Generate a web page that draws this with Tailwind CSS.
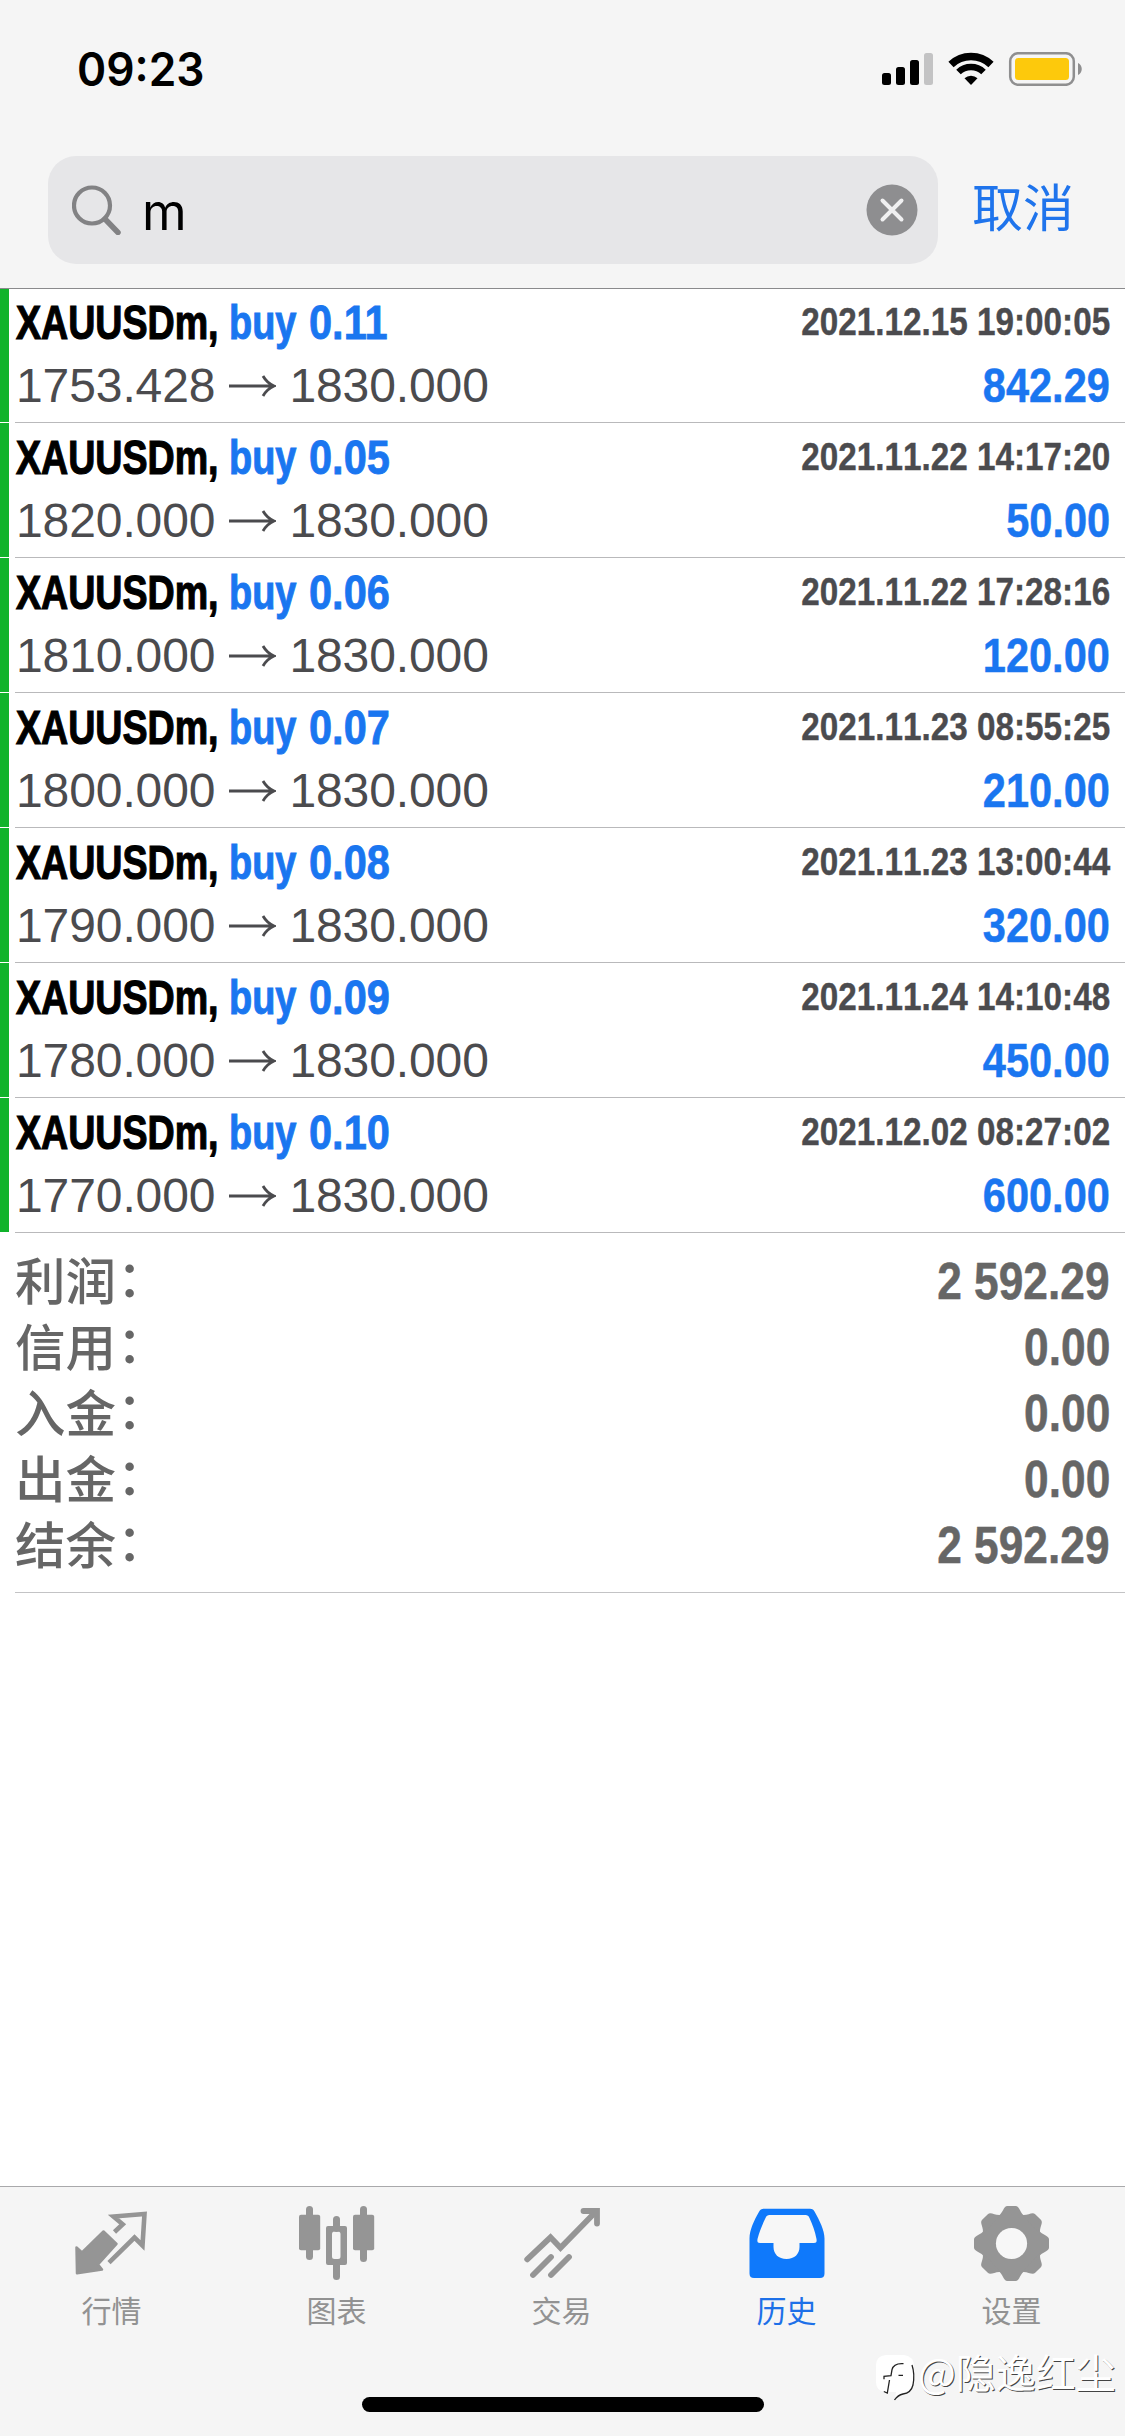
<!DOCTYPE html>
<html lang="zh-CN">
<head>
<meta charset="utf-8">
<title>历史</title>
<script src="https://cdn.jsdelivr.net/npm/@tailwindcss/browser@4"></script>
</head>
<body class="bg-white">
<div class="flex h-[2436px] w-[1125px] flex-col overflow-hidden bg-white font-['Liberation_Sans','Noto_Sans_CJK_SC',sans-serif]">
  <header class="flex h-[289px] shrink-0 flex-col border-b border-[#8a8a8c] bg-[#f5f5f5]">
    <div class="flex h-[138px] items-center justify-between pr-[43px] pl-[77px]">
      <span class="origin-left scale-x-[0.963] font-['Inter',sans-serif] text-[46px] font-semibold leading-none">09:23</span>
      <svg class="h-[34px] w-[200px]" viewBox="882 52 200 34">
        <rect x="882" y="73" width="9" height="12" rx="2.5"/>
        <rect x="896" y="67" width="9" height="18" rx="2.5"/>
        <rect x="910" y="60" width="9" height="25" rx="2.5"/>
        <rect x="924" y="53" width="9" height="32" rx="2.5" fill="#c3c3c4"/>
        <path d="M971 85l-6.500-6.800a9.500 9.500 0 0 1 13 0z"/>
        <path d="M951 64.500a29 29 0 0 1 40 0" fill="none" stroke="#000" stroke-width="7.500"/>
        <path d="M958.500 72a18 18 0 0 1 25 0" fill="none" stroke="#000" stroke-width="6.500"/>
        <rect x="1010.200" y="53.200" width="63.600" height="31.600" rx="8" fill="none" stroke="#8f8f90" stroke-width="2.500"/>
        <rect x="1015" y="58" width="54" height="22" rx="3.500" fill="#fdc90c"/>
        <path d="M1078 63v12c5-2 5-10 0-12z" fill="#8f8f90"/>
      </svg>
    </div>
    <div class="flex items-center pt-[18px] pl-12">
      <div class="flex h-[108px] w-[890px] items-center rounded-[28px] bg-[#e6e6e8] pr-5 pl-6">
        <svg class="h-[50px] w-[50px]" viewBox="72 185 50 50" fill="none" stroke="#828284">
          <circle cx="92" cy="205.500" r="18" stroke-width="4.200"/>
          <path d="M105 219l13 13.500" stroke-width="5.500" stroke-linecap="round"/>
        </svg>
        <span class="ml-5 pt-[3px] font-['Inter',sans-serif] text-[51px] leading-[60px]">m</span>
        <svg class="ml-auto h-[52px] w-[52px]" viewBox="0 0 52 52">
          <circle cx="26" cy="26" r="25.500" fill="#8e8e90"/>
          <path d="M16.500 16.500l19 19M35.500 16.500l-19 19" stroke="#f0f0f1" stroke-width="4" stroke-linecap="round"/>
        </svg>
      </div>
      <span class="ml-[34px] -mt-2.5 font-['Noto_Sans_CJK_SC',sans-serif] text-[51px] leading-none text-[#1f74ec]">取消</span>
    </div>
  </header>

  <main id="deals" class="flex shrink-0 flex-col"></main>

  <section id="totals" class="ml-[15px] flex h-[360px] shrink-0 flex-col border-b border-[#c3c3c5] pt-[14px] pr-[15px]"></section>

  <footer class="relative mt-auto flex h-[250px] shrink-0 flex-col border-t border-[#a9a9ab] bg-[#f5f5f5]">
    <nav class="mr-px -ml-px grid grid-cols-5 pt-4 text-center font-['Noto_Sans_CJK_SC',sans-serif] text-[30px] leading-[44px] text-[#929292]">
      <a class="flex flex-col items-center">
        <svg class="h-[84px] w-[86px]" viewBox="69 33 86 84">
          <path d="M76.500 77.500l5.500 5 21.500-21 13 12.500L98 94.500l4 5-25 3.800z" fill="#959595" stroke="#959595" stroke-width="2.500" stroke-linejoin="round"/>
          <path d="M114.500 62l8.200-7.700-9.200-7.800L144.500 44l-2 31.500-8-8L109 92.700" fill="none" stroke="#959595" stroke-width="4.600"/>
        </svg>
        <span>行情</span>
      </a>
      <a class="flex flex-col items-center">
        <svg class="h-[84px] w-[86px]" viewBox="294 33 86 84" fill="#959595">
          <rect x="299" y="44.700" width="21.200" height="35.500" rx="2"/><rect x="306" y="36" width="7" height="54" rx="3.500"/>
          <rect x="353" y="44.700" width="21.200" height="35.500" rx="2"/><rect x="360" y="36" width="7" height="56" rx="3.500"/>
          <rect x="333" y="46" width="7" height="16" rx="3.500"/><rect x="333" y="90" width="7" height="20" rx="3.500"/>
          <path fill-rule="evenodd" d="M328 56h17a2 2 0 0 1 2 2v35a2 2 0 0 1-2 2h-17a2 2 0 0 1-2-2V58a2 2 0 0 1 2-2zM334.500 61.500a2.500 2.500 0 0 0-2.500 2.500v22.500a2.500 2.500 0 0 0 2.500 2.500h3.500a2.500 2.500 0 0 0 2.500-2.500V64a2.500 2.500 0 0 0-2.500-2.500z"/>
        </svg>
        <span>图表</span>
      </a>
      <a class="flex flex-col items-center">
        <svg class="h-[84px] w-[86px]" viewBox="518.500 33 86 84" fill="none" stroke="#959595" stroke-width="5.800" stroke-linecap="round">
          <path d="M526.700 89.300L550 67.300l10 10.500L595 42"/>
          <path d="M583 41h13.500v12.500"/>
          <path d="M532.500 105l18-18M550.500 105l18-18"/>
        </svg>
        <span>交易</span>
      </a>
      <a class="flex flex-col items-center text-[#1d70e8]">
        <svg class="h-[84px] w-[86px]" viewBox="743.500 33 86 84">
          <path fill="#0f79fb" d="M764 38.700h45.500c2.500 0 3.600 1 4.800 3.200 4.700 8.500 9.700 18 9.700 26.600v35c0 3-1.500 4.500-4.500 4.500h-66c-3 0-4.500-1.500-4.500-4.500v-35c0-8.600 4.500-18 9.400-26.600 1.300-2.200 2.600-3.200 5.600-3.200z"/>
          <path fill="#f7f7f7" d="M769 45h36c2 0 3 .8 4 3 3 6.500 5.500 13 7 21 .5 3-.3 4-2.500 4H799v4c0 7-5 12-13 12s-13-5-13-12v-4h-13.500c-2.200 0-3-1-2.500-4 2-8 5-14.500 8-21 1-2.200 2-3 4-3z"/>
        </svg>
        <span>历史</span>
      </a>
      <a class="flex flex-col items-center">
        <svg class="h-[84px] w-[86px]" viewBox="-42.500 -40.500 86 84">
          <g fill="#959595">
            <circle r="30"/>
            <path id="tooth" d="M-14-27C-8-30-8.500-37.500-4-37.500H4C8.500-37.500 8-30 14-27z"/>
            <use href="#tooth" transform="rotate(45)"/><use href="#tooth" transform="rotate(90)"/><use href="#tooth" transform="rotate(135)"/><use href="#tooth" transform="rotate(180)"/><use href="#tooth" transform="rotate(225)"/><use href="#tooth" transform="rotate(270)"/><use href="#tooth" transform="rotate(315)"/>
          </g>
          <circle r="15.600" fill="#f7f7f7"/>
        </svg>
        <span>设置</span>
      </a>
    </nav>
    <div class="mt-auto mb-6 h-[15px] w-[402px] self-center rounded-full bg-black"></div>
    <div class="absolute top-[153px] left-[876px] flex items-center">
      <svg class="mt-3 h-[50px] w-[42px]" viewBox="0 0 42 50">
        <path d="M10 3h18q10 1 10 12v14q0 9-9 11-6 2-10 7l1-7H9q-9-1-9-10V13Q0 4 10 3z" fill="#fff"/>
        <path d="M36 13q3 9 1 20-2 8-10 9-5 1-8.500 6" fill="none" stroke="#222" stroke-width="1.300"/>
        <path d="M27.500 11.700q-10-.7-11.500 6l-1 6-7 .6v3M22.500 23.300h4.500M13.500 28l-2.200 13-3.500-1.500" fill="none" stroke="#222" stroke-width="1.300"/>
      </svg>
      <span class="font-['Noto_Sans_CJK_SC',sans-serif] text-[40px] leading-[50px] text-white [text-shadow:1px_1.200px_0_#444]">@隐逸红尘</span>
    </div>
  </footer>
</div>
<script>
  const deals = [
    ['0.11', '2021.12.15 19:00:05', '1753.428', '842.29'],
    ['0.05', '2021.11.22 14:17:20', '1820.000', '50.00'],
    ['0.06', '2021.11.22 17:28:16', '1810.000', '120.00'],
    ['0.07', '2021.11.23 08:55:25', '1800.000', '210.00'],
    ['0.08', '2021.11.23 13:00:44', '1790.000', '320.00'],
    ['0.09', '2021.11.24 14:10:48', '1780.000', '450.00'],
    ['0.10', '2021.12.02 08:27:02', '1770.000', '600.00'],
  ];
  document.getElementById('deals').innerHTML = deals.map(([lot, time, open, profit]) => `
    <article class="flex h-[135px] first:h-[134px]">
      <i class="mb-px w-[9px] shrink-0 bg-[#10b32b]"></i>
      <div class="ml-1.5 flex grow flex-col justify-end border-b border-[#b9b9bb] pr-[15px] pb-[5px]">
        <div class="flex h-[62px] items-center justify-between">
          <div class="mb-[3px] flex pl-px text-[48px] font-bold leading-[59px]">
            <span class="w-[213px] origin-left scale-x-[0.783] whitespace-nowrap [-webkit-text-stroke:1.200px_#000]">XAUUSDm,</span>
            <span class="w-[80px] origin-left scale-x-[0.790] whitespace-nowrap text-[#1a76f0] [-webkit-text-stroke:1px_#1a76f0]">buy</span>
            <span class="origin-left scale-x-[0.865] whitespace-nowrap text-[#1a76f0] [-webkit-text-stroke:0.800px_#1a76f0]">${lot}</span>
          </div>
          <span class="mb-1 origin-right scale-x-[0.853] whitespace-nowrap text-[39px] font-bold leading-[58px] text-[#4b4b4e] [font-kerning:none] [-webkit-text-stroke:0.400px_#4b4b4e]">${time}</span>
        </div>
        <div class="flex h-[62px] items-center justify-between text-[48px] leading-[62px]">
          <div class="flex items-center pl-px text-[#4b4b4e]">
            <span class="-tracking-[0.1px]">${open}</span>
            <svg class="mr-[13px] ml-[14px] h-[22px] w-[47px]" viewBox="0 0 47 22" fill="none" stroke="#4b4b4e" stroke-width="2.800"><path d="M0 11h45M34 1q4 7 11 10-7 3-11 10"/></svg>
            <span class="-tracking-[0.1px]">1830.000</span>
          </div>
          <span class="origin-right scale-x-[0.865] font-bold text-[#1a76f0] [-webkit-text-stroke:0.500px_#1a76f0]">${profit}</span>
        </div>
      </div>
    </article>`).join('');
  const totals = [['利润', '2 592.29'], ['信用', '0.00'], ['入金', '0.00'], ['出金', '0.00'], ['结余', '2 592.29']];
  document.getElementById('totals').innerHTML = totals.map(([label, value]) => `
    <div class="flex h-[66px] items-center justify-between text-[#666]">
      <span class="flex font-['Noto_Sans_CJK_SC',sans-serif] text-[50.500px] font-medium leading-[62px]"><span class="-mt-1">${label}</span><span class="-mt-[7px] pl-px">：</span></span>
      <span class="mt-[3px] origin-right scale-x-[0.868] whitespace-nowrap text-[51px] font-bold leading-[63px] [-webkit-text-stroke:0.500px_#666]">${value}</span>
    </div>`).join('');
</script>
</body>
</html>
